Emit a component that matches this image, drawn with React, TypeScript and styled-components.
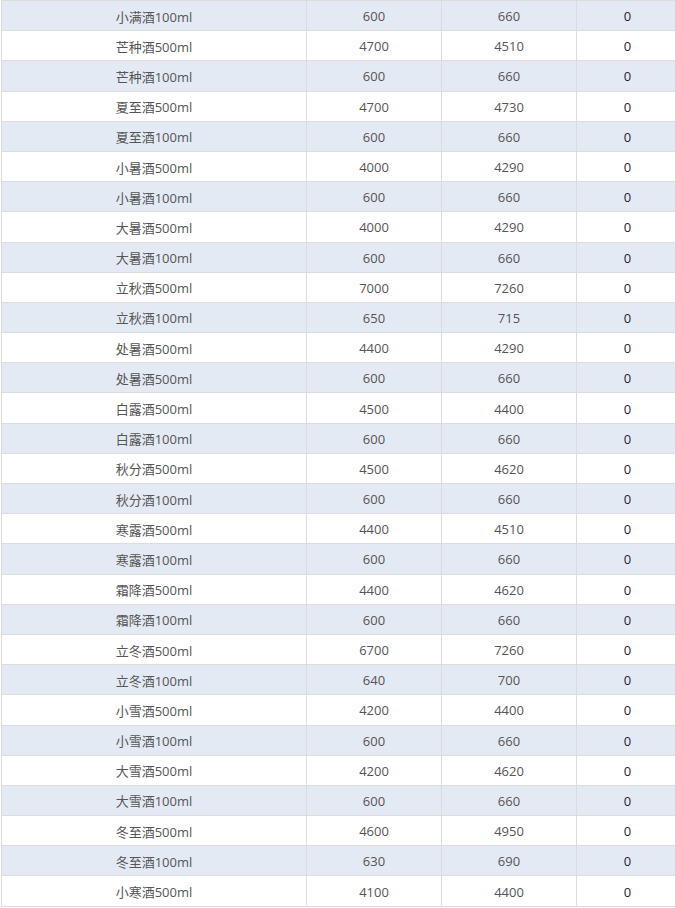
import React from 'react';
import styled, { createGlobalStyle } from 'styled-components';

const GlobalStyle = createGlobalStyle`
  html, body {
    margin: 0;
    padding: 0;
    background: #fff;
    overflow: hidden;
  }
  body {
    font-family: "Open Sans", "Noto Sans CJK SC", sans-serif;
  }
`;

const rows: [string, number, number, number][] = [
  ['小满酒100ml', 600, 660, 0],
  ['芒种酒500ml', 4700, 4510, 0],
  ['芒种酒100ml', 600, 660, 0],
  ['夏至酒500ml', 4700, 4730, 0],
  ['夏至酒100ml', 600, 660, 0],
  ['小暑酒500ml', 4000, 4290, 0],
  ['小暑酒100ml', 600, 660, 0],
  ['大暑酒500ml', 4000, 4290, 0],
  ['大暑酒100ml', 600, 660, 0],
  ['立秋酒500ml', 7000, 7260, 0],
  ['立秋酒100ml', 650, 715, 0],
  ['处暑酒500ml', 4400, 4290, 0],
  ['处暑酒500ml', 600, 660, 0],
  ['白露酒500ml', 4500, 4400, 0],
  ['白露酒100ml', 600, 660, 0],
  ['秋分酒500ml', 4500, 4620, 0],
  ['秋分酒100ml', 600, 660, 0],
  ['寒露酒500ml', 4400, 4510, 0],
  ['寒露酒100ml', 600, 660, 0],
  ['霜降酒500ml', 4400, 4620, 0],
  ['霜降酒100ml', 600, 660, 0],
  ['立冬酒500ml', 6700, 7260, 0],
  ['立冬酒100ml', 640, 700, 0],
  ['小雪酒500ml', 4200, 4400, 0],
  ['小雪酒100ml', 600, 660, 0],
  ['大雪酒500ml', 4200, 4620, 0],
  ['大雪酒100ml', 600, 660, 0],
  ['冬至酒500ml', 4600, 4950, 0],
  ['冬至酒100ml', 630, 690, 0],
  ['小寒酒500ml', 4100, 4400, 0],
];

const widths = [305, 135, 135, 102];

const Table = styled.table`
  border-collapse: collapse;
  table-layout: fixed;
  width: 677px;
  margin-left: 1px;
  font-size: 13px;
  color: #555;
`;

const Col = styled.col<{ w: number }>`
  width: ${({ w }) => w}px;
`;

const Row = styled.tr<{ shaded: boolean }>`
  height: 30.2px;
  background-color: ${({ shaded }) => (shaded ? '#e4eaf4' : '#fff')};
`;

const Cell = styled.td<{ strong?: boolean }>`
  border: 1px solid #dcdcdc;
  padding: 1px 0 0;
  text-align: center;
  vertical-align: middle;
  color: ${({ strong }) => (strong ? '#1c2430' : '#555')};
`;

export default function App() {
  return (
    <>
      <GlobalStyle />
      <Table>
        <colgroup>
          {widths.map((w, i) => (
            <Col key={i} w={w} />
          ))}
        </colgroup>
        <tbody>
          {rows.map(([name, cost, price, stock], i) => (
            <Row key={i} shaded={i % 2 === 0}>
              <Cell>{name}</Cell>
              <Cell>{cost}</Cell>
              <Cell>{price}</Cell>
              <Cell strong>{stock}</Cell>
            </Row>
          ))}
        </tbody>
      </Table>
    </>
  );
}
